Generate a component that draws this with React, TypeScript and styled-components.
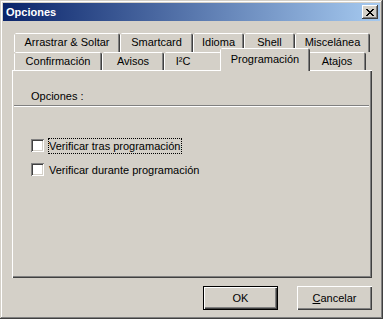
import styled, { createGlobalStyle } from "styled-components";

// Win2000-style "Opciones" dialog, tab page "Programación".

const face = "#D4D0C8";
const shade = "#808080";
const dark = "#404040";

const Global = createGlobalStyle`
  html, body { margin: 0; padding: 0; background: ${face}; }
  body {
    font-family: "Liberation Sans", Arial, sans-serif;
    font-size: 11px;
    color: #000;
  }
`;

/* ── Frame ─────────────────────────────────────────────────────── */

const Window = styled.div`
  box-sizing: border-box;
  width: 383px;
  height: 319px;
  padding: 3px;
  display: flex;
  flex-direction: column;
  background: ${face};
  box-shadow:
    inset -1px -1px ${dark},
    inset 1px 1px ${face},
    inset -2px -2px ${shade},
    inset 2px 2px #fff;
`;

const TitleBar = styled.div`
  height: 18px;
  display: flex;
  align-items: center;
  justify-content: space-between;
  padding: 0 2px 0 3px;
  background: linear-gradient(to right, #0a246a, #a6caf0);
`;

const TitleText = styled.span`
  color: #fff;
  font-weight: 700;
  font-size: 11px;
  line-height: 13px;
`;

const CloseBtn = styled.button`
  width: 16px;
  height: 14px;
  padding: 0;
  border: 0;
  display: flex;
  align-items: center;
  justify-content: center;
  background: ${face};
  box-shadow:
    inset -1px -1px ${dark},
    inset 1px 1px #fff,
    inset -2px -2px ${shade},
    inset 2px 2px ${face};
`;

/* ── Tabs ──────────────────────────────────────────────────────── */

const TabControl = styled.div`
  margin: 12px 0 0 9px;
  width: 360px;
  display: flex;
  flex-direction: column;
`;

const TabRow = styled.div<{ $h: number }>`
  display: flex;
  height: ${(p) => p.$h}px;
  padding-left: 2px;
`;

const Tab = styled.div<{ $w: number; $active?: boolean; $pr?: number }>`
  box-sizing: border-box;
  width: ${(p) => p.$w}px;
  flex: none;
  display: flex;
  justify-content: center;
  align-items: ${(p) => (p.$active ? "flex-start" : "center")};
  padding: ${(p) => (p.$active ? 5 : 0)}px ${(p) => p.$pr ?? 0}px 0 0;
  margin: ${(p) => (p.$active ? "-4px -2px -1px" : "0")};
  z-index: ${(p) => (p.$active ? 1 : 0)};
  line-height: 13px;
  white-space: nowrap;
  background: ${face};
  clip-path: polygon(2px 0, calc(100% - 2px) 0, 100% 2px, 100% 100%, 0 100%, 0 2px);
  box-shadow:
    inset 1px 0 #fff,
    inset 0 1px #fff,
    inset -1px 0 ${dark},
    inset -2px 0 ${shade};
`;

const Panel = styled.div`
  box-sizing: border-box;
  height: 208px;
  padding: 20px 3px 0 2px;
  display: flex;
  flex-direction: column;
  box-shadow:
    inset 1px 1px #fff,
    inset -1px -1px ${dark},
    inset -2px -2px ${shade};
`;

const GroupLabel = styled.div`
  padding-left: 17px;
  line-height: 13px;
`;

const Separator = styled.div`
  margin-top: 2px;
  height: 0;
  border-top: 1px solid ${shade};
  border-bottom: 1px solid #fff;
`;

const CheckList = styled.div`
  margin-top: 30px;
  display: flex;
  flex-direction: column;
  gap: 7px;
  padding-left: 17px;
`;

const CheckRow = styled.label`
  display: flex;
  align-items: center;
  height: 17px;
`;

const Box = styled.span`
  width: 13px;
  height: 13px;
  flex: none;
  background: #fff;
  box-shadow:
    inset 1px 1px ${shade},
    inset -1px -1px #fff,
    inset 2px 2px ${dark},
    inset -2px -2px ${face};
`;

const CheckText = styled.span<{ $focus?: boolean }>`
  margin-left: 4px;
  padding: 1px 1px 0 0;
  line-height: 13px;
  border: 1px dotted ${(p) => (p.$focus ? "#000" : "transparent")};
`;

/* ── Buttons ───────────────────────────────────────────────────── */

const ButtonRow = styled.div`
  margin-top: 8px;
  display: flex;
  justify-content: flex-end;
  gap: 19px;
  padding-right: 8px;
`;

const Button = styled.button<{ $default?: boolean }>`
  box-sizing: border-box;
  width: 75px;
  height: 24px;
  padding: 0;
  font: inherit;
  color: #000;
  background: ${face};
  border: ${(p) => (p.$default ? "1px solid #000" : "0")};
  box-shadow:
    inset 1px 1px #fff,
    inset -1px -1px ${dark},
    inset -2px -2px ${shade};
`;

const Accel = styled.span`
  text-decoration: underline;
`;

function CloseGlyph() {
  const rows = [
    [0, 1, 6, 7],
    [1, 2, 5, 6],
    [2, 3, 4, 5],
    [3, 4],
    [2, 3, 4, 5],
    [1, 2, 5, 6],
    [0, 1, 6, 7],
  ];
  return (
    <svg width="8" height="7" viewBox="0 0 8 7" shapeRendering="crispEdges">
      {rows.flatMap((cols, y) =>
        cols.map((x) => <rect key={`${x}-${y}`} x={x} y={y} width="1" height="1" fill="#000" />)
      )}
    </svg>
  );
}

// [label, width, extra right padding]
const backTabs: [string, number, number][] = [
  ["Arrastrar & Soltar", 106, 0],
  ["Smartcard", 73, 0],
  ["Idioma", 51, 0],
  ["Shell", 51, 0],
  ["Miscelánea", 75, 0],
];

const frontTabs: [string, number, number][] = [
  ["Confirmación", 88, 0],
  ["Avisos", 62, 0],
  ["I²C", 58, 20],
  ["Programación", 90, 0],
  ["Atajos", 58, 0],
];

export default function App() {
  return (
    <>
      <Global />
      <Window>
        <TitleBar>
          <TitleText>Opciones</TitleText>
          <CloseBtn type="button" aria-label="Cerrar">
            <CloseGlyph />
          </CloseBtn>
        </TitleBar>

        <TabControl>
          <TabRow $h={19}>
            {backTabs.map(([label, w, pr]) => (
              <Tab key={label} $w={w} $pr={pr}>{label}</Tab>
            ))}
          </TabRow>
          <TabRow $h={18}>
            {frontTabs.map(([label, w, pr]) => (
              <Tab key={label} $w={w} $pr={pr} $active={label === "Programación"}>
                {label}
              </Tab>
            ))}
          </TabRow>
          <Panel>
            <GroupLabel>Opciones :</GroupLabel>
            <Separator />
            <CheckList>
              <CheckRow>
                <Box />
                <CheckText $focus>Verificar tras programación</CheckText>
              </CheckRow>
              <CheckRow>
                <Box />
                <CheckText>Verificar durante programación</CheckText>
              </CheckRow>
            </CheckList>
          </Panel>
        </TabControl>

        <ButtonRow>
          <Button type="button" $default>OK</Button>
          <Button type="button"><Accel>C</Accel>ancelar</Button>
        </ButtonRow>
      </Window>
    </>
  );
}
